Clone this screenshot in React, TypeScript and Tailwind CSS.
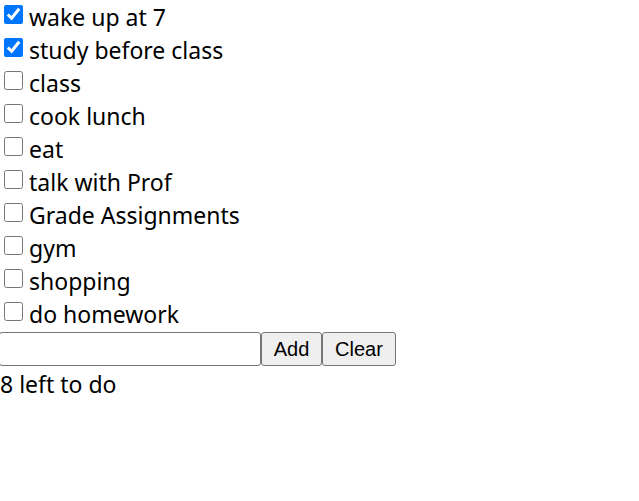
import React, { useState } from 'react';

const INITIAL = [
  { text: 'wake up at 7', done: true },
  { text: 'study before class', done: true },
  { text: 'class', done: false },
  { text: 'cook lunch', done: false },
  { text: 'eat', done: false },
  { text: 'talk with Prof', done: false },
  { text: 'Grade Assignments', done: false },
  { text: 'gym', done: false },
  { text: 'shopping', done: false },
  { text: 'do homework', done: false },
];

export default function App() {
  const [todos, setTodos] = useState(INITIAL);
  const [draft, setDraft] = useState('');
  const left = todos.filter(t => !t.done).length;

  return (
    <div className="bg-white text-black text-[23px] leading-[33px] font-['Segoe_UI','Noto_Sans',sans-serif] w-[639px] h-[501px]">
      <ul>
        {todos.map((t, i) => (
          <li key={i} className="flex items-center h-[33px]">
            <input
              type="checkbox"
              checked={t.done}
              onChange={() => setTodos(todos.map((x, j) => (j === i ? { ...x, done: !x.done } : x)))}
              className="w-[19px] h-[19px] ml-[4px] mr-[6px] -mt-[4px]"
            />
            <span className="pt-[2px]">{t.text}</span>
          </li>
        ))}
      </ul>
      <div className="flex h-[34px] mt-[2px]">
        <input
          value={draft}
          onChange={e => setDraft(e.target.value)}
          className="w-[262px] h-[34px] -ml-[1px] border border-[#767676] rounded-[3px] px-1 text-[20px]"
        />
        <button className="w-[61px] h-[34px] border border-[#767676] rounded-[3px] bg-[#efefef] text-[20px] font-['Liberation_Sans',Arial,sans-serif]">
          Add
        </button>
        <button className="w-[74px] h-[34px] border border-[#767676] rounded-[3px] bg-[#efefef] text-[20px] font-['Liberation_Sans',Arial,sans-serif]">
          Clear
        </button>
      </div>
      <div className="leading-[36px] text-[23px]">{left} left to do</div>
    </div>
  );
}
